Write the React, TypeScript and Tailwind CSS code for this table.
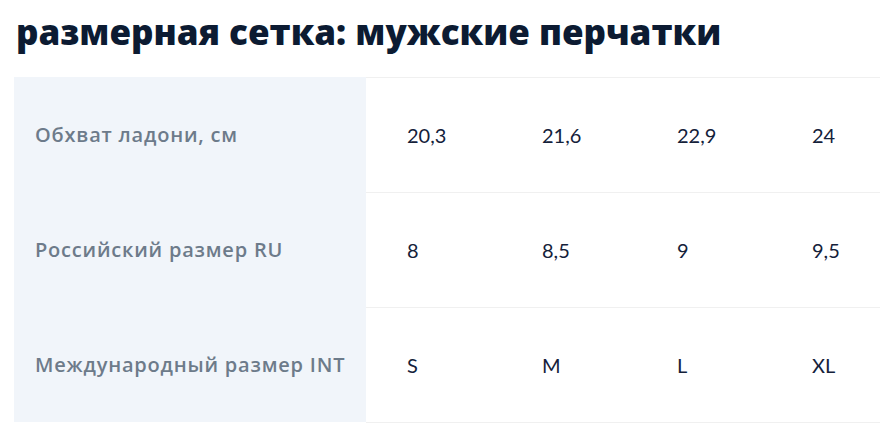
const rows = [
  { label: "Обхват ладони, см", values: ["20,3", "21,6", "22,9", "24"] },
  { label: "Российский размер RU", values: ["8", "8,5", "9", "9,5"] },
  { label: "Международный размер INT", values: ["S", "M", "L", "XL"] },
];

export default function App() {
  return (
    <div className="h-[440px] w-[880px] bg-white font-['Open_Sans','Noto_Sans',sans-serif]">
      <h1 className="pl-4 pt-[10px] text-[35px] font-extrabold leading-[44px] text-[#0c1b32]">
        размерная сетка: мужские перчатки
      </h1>
      <div className="ml-[14px] mt-[23px] w-[854px]">
        {rows.map((row) => (
          <div key={row.label} className="flex h-[115px]">
            <div className="flex w-[352px] shrink-0 items-center bg-[#f1f5fa] pl-[21px] text-[20px] font-semibold tracking-[0.8px] text-[#6d7b8a]">
              {row.label}
            </div>
            <div className="-mb-px flex flex-1 items-center border-b border-t border-[#f0f0f0]">
              {row.values.map((v) => (
                <div
                  key={v}
                  className="w-[135px] pl-[41px] font-['Lato',sans-serif] text-[20px] text-[#14213a]"
                >
                  {v}
                </div>
              ))}
            </div>
          </div>
        ))}
      </div>
    </div>
  );
}
